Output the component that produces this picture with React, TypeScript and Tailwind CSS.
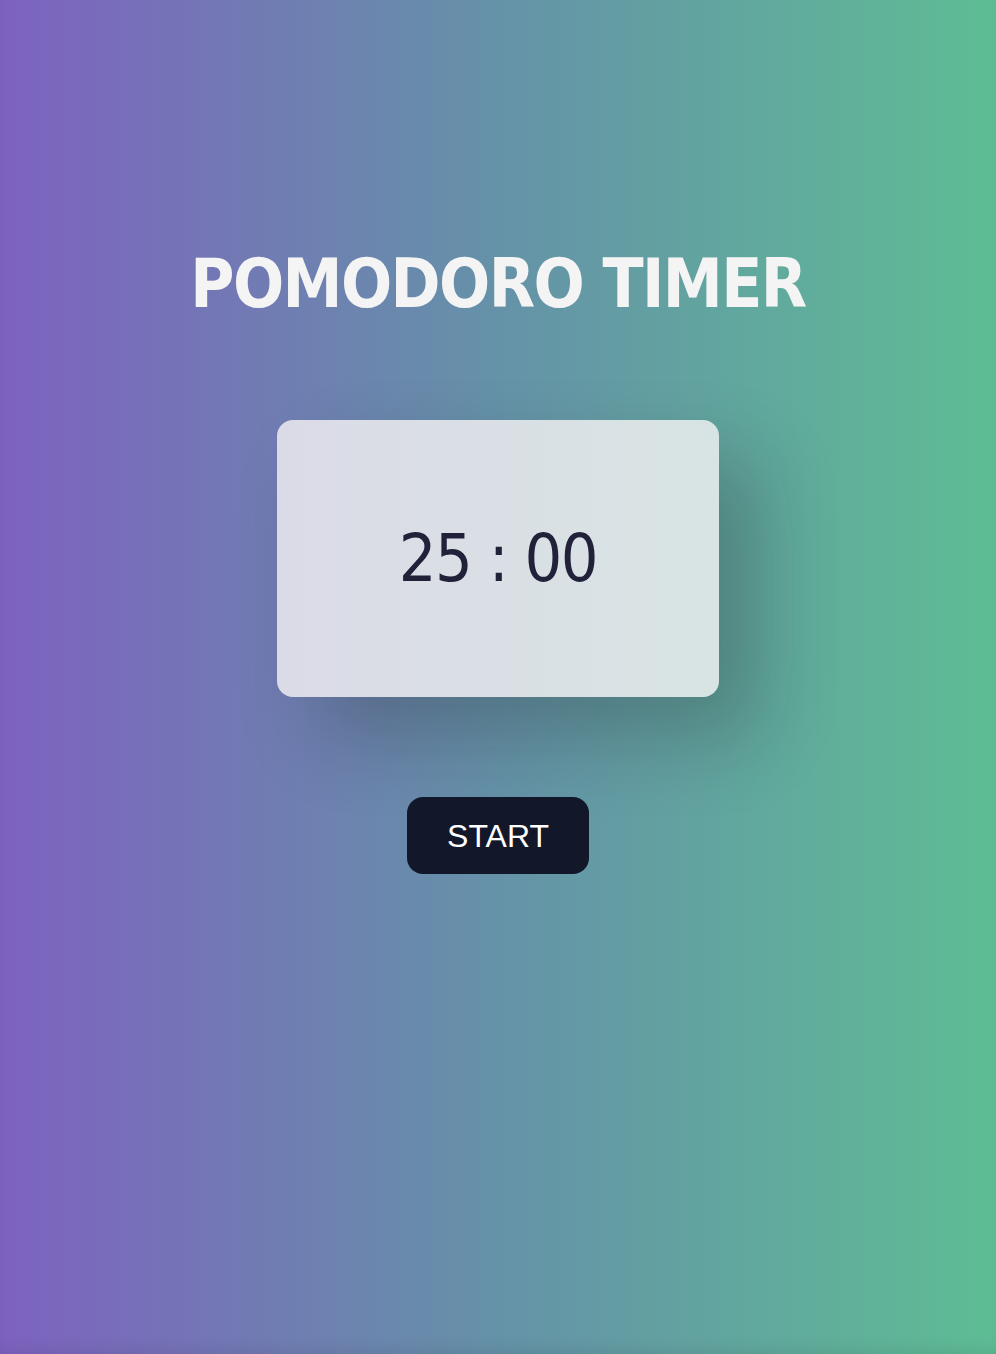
export default function App() {
  return (
    <div className="min-h-[1354px] w-full bg-[linear-gradient(to_right,#7e62c0_0%,#6592a8_50%,#5ebd94_100%)] shadow-[inset_0_-12px_20px_-12px_rgba(0,0,0,0.12)] flex flex-col items-center">
      <h1 className="mt-[246px] text-[67px] leading-[76px] font-bold text-[#f4f4f4] tracking-[-1.6px] font-['DejaVu_Sans_Condensed','DejaVu_Sans',sans-serif]">
        POMODORO TIMER
      </h1>

      <div className="mt-[98px] w-[442px] h-[277px] rounded-[16px] bg-[linear-gradient(to_right,#dbdbe7,#d8e4e3)] shadow-[40px_40px_80px_rgba(20,20,20,0.24)] flex items-center justify-center">
        <span className="text-[66px] leading-none tracking-[-1.5px] text-[#21223a] font-['DejaVu_Sans_Condensed','DejaVu_Sans',sans-serif]">
          25 : 00
        </span>
      </div>

      <button className="mt-[100px] w-[182px] h-[77px] rounded-[16px] bg-[#121829] text-white text-[32px] font-['Liberation_Sans',Arial,sans-serif]">
        START
      </button>
    </div>
  )
}
